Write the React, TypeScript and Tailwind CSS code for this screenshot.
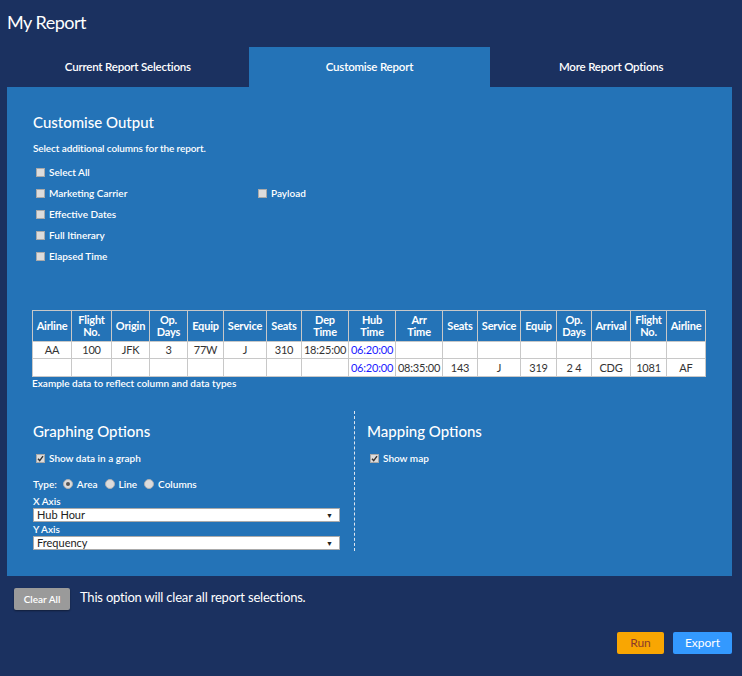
import React from 'react';

const FONT = "font-['Lato','Noto_Sans',sans-serif]";

const cols = [
  { label: ['Airline'], w: 39 },
  { label: ['Flight', 'No.'], w: 40 },
  { label: ['Origin'], w: 38 },
  { label: ['Op.', 'Days'], w: 38 },
  { label: ['Equip'], w: 36 },
  { label: ['Service'], w: 43 },
  { label: ['Seats'], w: 35 },
  { label: ['Dep', 'Time'], w: 47 },
  { label: ['Hub', 'Time'], w: 47 },
  { label: ['Arr', 'Time'], w: 47 },
  { label: ['Seats'], w: 35 },
  { label: ['Service'], w: 43 },
  { label: ['Equip'], w: 36 },
  { label: ['Op.', 'Days'], w: 35 },
  { label: ['Arrival'], w: 39 },
  { label: ['Flight', 'No.'], w: 36 },
  { label: ['Airline'], w: 39 },
];

const rows = [
  ['AA', '100', 'JFK', '3', '77W', 'J', '310', '18:25:00', '06:20:00', '', '', '', '', '', '', '', ''],
  ['', '', '', '', '', '', '', '', '06:20:00', '08:35:00', '143', 'J', '319', '2 4', 'CDG', '1081', 'AF'],
];

const Box = ({ checked }: { checked?: boolean }) => (
  <span className="w-[9px] h-[9px] bg-[#dcdcdc] border border-[#a9a9a9] flex items-center justify-center shrink-0">
    {checked && (
      <svg width="7" height="7" viewBox="0 0 7 7">
        <path d="M1 3.8 L2.7 5.6 L6 1.2" stroke="#333" strokeWidth="1.4" fill="none" />
      </svg>
    )}
  </span>
);

const Radio = ({ on }: { on?: boolean }) => (
  <span className="w-[10px] h-[10px] rounded-full bg-[#dcdcdc] border border-[#b0b0b0] flex items-center justify-center shrink-0">
    {on && <span className="w-[4px] h-[4px] rounded-full bg-[#555]" />}
  </span>
);

const Check = ({ label, checked }: { label: string; checked?: boolean }) => (
  <label className="flex items-center gap-[4px] h-[21px] text-[10px] font-semibold">
    <Box checked={checked} />
    {label}
  </label>
);

const Select = ({ value }: { value: string }) => (
  <div className="w-[307px] h-[14px] bg-white border border-[#aaa] flex items-center justify-between pl-[3px] pr-[6px] text-[11px] text-[#222]">
    <span>{value}</span>
    <span className="text-[7px]">▼</span>
  </div>
);

export default function App() {
  return (
    <div className={`min-h-screen bg-[#1b3160] text-white ${FONT}`}>
      <h1 className="pl-[7px] pt-[10px] h-[47px] text-[18px] leading-[24px] tracking-[-0.5px]">My Report</h1>
      <div className="ml-[7px] mr-[10px]">
        <div className="grid grid-cols-3 h-[40px] text-[11.5px] font-semibold tracking-[-0.2px]">
          <div className="flex items-center justify-center">Current Report Selections</div>
          <div className="flex items-center justify-center bg-[#2473b7]">Customise Report</div>
          <div className="flex items-center justify-center">More Report Options</div>
        </div>
        <div className="bg-[#2473b7] h-[489px] pt-[25px] pl-[25px] pr-[26px]">
          <h2 className="pl-[1px] text-[15px] leading-[20px] font-medium">Customise Output</h2>
          <p className="mt-[10px] pl-[1px] text-[10px] leading-[12px] font-semibold tracking-[-0.1px]">
            Select additional columns for the report.
          </p>
          <div className="mt-[8px] pl-[4px] grid grid-cols-[222px_1fr]">
            <Check label="Select All" />
            <div />
            <Check label="Marketing Carrier" />
            <Check label="Payload" />
            <Check label="Effective Dates" />
            <div />
            <Check label="Full Itinerary" />
            <div />
            <Check label="Elapsed Time" />
          </div>

          <table className="mt-[43px] table-fixed border-collapse w-[674px] text-[11px]">
            <colgroup>
              {cols.map((c, i) => (
                <col key={i} style={{ width: c.w }} />
              ))}
            </colgroup>
            <thead>
              <tr className="h-[31px]">
                {cols.map((c, i) => (
                  <th key={i} className="border border-[#c8c8c8] font-bold leading-[12px] text-center px-0 tracking-[-0.2px]">
                    {c.label.map((l, j) => (
                      <div key={j}>{l}</div>
                    ))}
                  </th>
                ))}
              </tr>
            </thead>
            <tbody>
              {rows.map((r, ri) => (
                <tr key={ri} className={ri === 0 ? 'h-[17px]' : 'h-[18px]'}>
                  {r.map((v, ci) => (
                    <td
                      key={ci}
                      className={`border border-[#c8c8c8] bg-white text-center leading-[12px] p-0 tracking-[-0.2px] ${
                        ci === 8 ? 'text-[#1a1aff]' : 'text-[#333]'
                      }`}
                    >
                      {v}
                    </td>
                  ))}
                </tr>
              ))}
            </tbody>
          </table>
          <p className="text-[10px] leading-[12px] font-semibold">Example data to reflect column and data types</p>

          <div className="mt-[22px] flex h-[140px]">
            <div className="w-[323px] border-r border-dashed border-[#dfe6f0] pt-[10px] pl-[1px]">
              <h2 className="text-[15px] leading-[20px] font-medium">Graphing Options</h2>
              <div className="mt-[10px] pl-[3px] flex items-center gap-[4px] h-[14px] text-[10px] font-semibold">
                <Box checked />
                Show data in a graph
              </div>
              <div className="mt-[12px] flex items-center h-[14px] text-[10px] font-semibold">
                <span className="mr-[6px]">Type:</span>
                <Radio on />
                <span className="ml-[4px] mr-[7px]">Area</span>
                <Radio />
                <span className="ml-[4px] mr-[7px]">Line</span>
                <Radio />
                <span className="ml-[4px]">Columns</span>
              </div>
              <div className="mt-[4px] text-[10px] leading-[12px] font-semibold">X Axis</div>
              <div className="mt-[1px]">
                <Select value="Hub Hour" />
              </div>
              <div className="mt-[1px] text-[10px] leading-[12px] font-semibold">Y Axis</div>
              <div className="mt-[1px]">
                <Select value="Frequency" />
              </div>
            </div>
            <div className="pl-[12px] pt-[10px]">
              <h2 className="text-[15px] leading-[20px] font-medium">Mapping Options</h2>
              <div className="mt-[10px] pl-[3px] flex items-center gap-[4px] h-[14px] text-[10px] font-semibold">
                <Box checked />
                Show map
              </div>
            </div>
          </div>
        </div>

        <div className="mt-[12px] ml-[7px] flex items-start">
          <button className="w-[56px] h-[22px] bg-[#9a9a9a] rounded-[2px] shadow-[0_1px_2px_rgba(0,0,0,0.4)] text-[10px] font-semibold text-white">
            Clear All
          </button>
          <span className="ml-[10px] text-[13px] leading-[18px] tracking-[-0.2px]">
            This option will clear all report selections.
          </span>
        </div>

        <div className="mt-[22px] flex justify-end gap-[9px]">
          <button className="w-[47px] h-[22px] bg-[#f9a602] rounded-[2px] text-[12px] text-[#8b3a2a]">Run</button>
          <button className="w-[59px] h-[22px] bg-[#3399ff] rounded-[2px] text-[12px] text-white">Export</button>
        </div>
      </div>
    </div>
  );
}
